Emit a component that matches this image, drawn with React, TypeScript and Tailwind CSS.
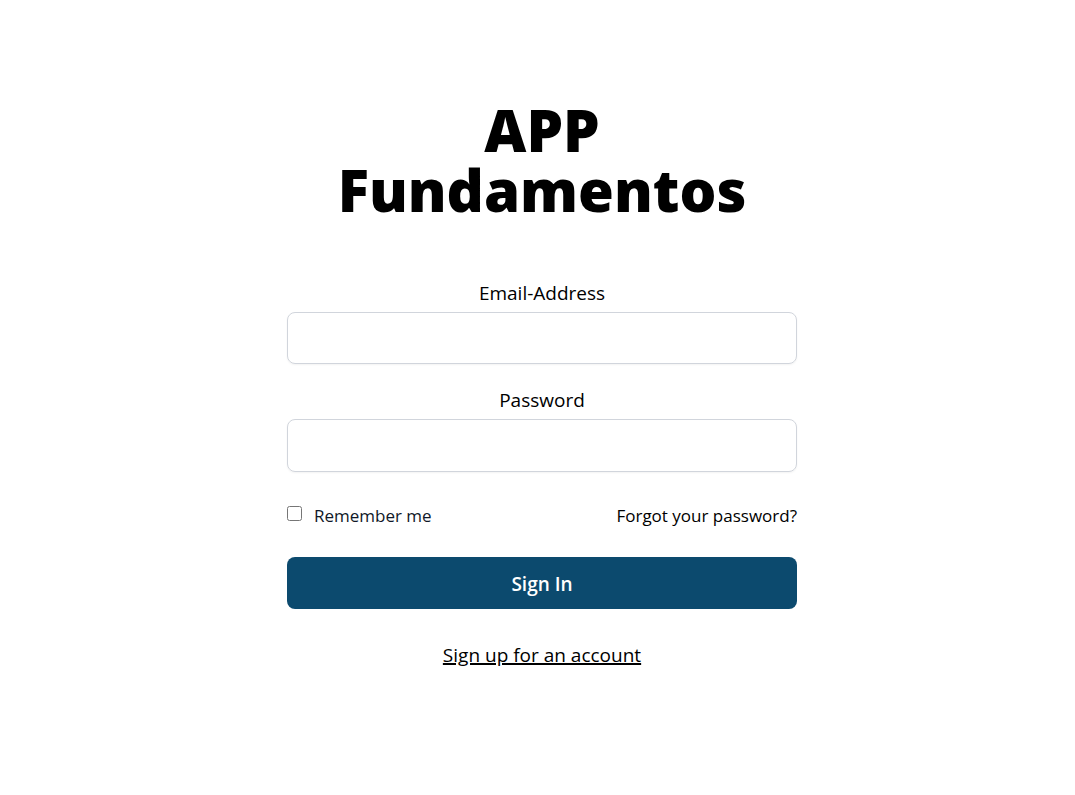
export default function App() {
  return (
    <main className="flex min-h-screen flex-col items-center bg-white pt-[100px] pr-4 pl-[25px] text-center font-['Open_Sans',sans-serif] text-black">
      <form className="w-full max-w-[510px]" onSubmit={(e) => e.preventDefault()}>
        <h1 className="text-[58px] leading-[60px] font-black">
          APP
          <br />
          Fundamentos
        </h1>
        <div className="mt-[59px]">
          <label htmlFor="email" className="block text-[19px] leading-[28px]">Email-Address</label>
          <input id="email" type="email" className="mt-[5px] block h-[52px] w-full rounded-lg border border-gray-300 px-3 shadow-xs" />
        </div>
        <div className="mt-[22px]">
          <label htmlFor="password" className="block text-[19px] leading-[28px]">Password</label>
          <input id="password" type="password" className="mt-[5px] block h-[53px] w-full rounded-lg border border-gray-300 px-3 shadow-xs" />
        </div>
        <div className="mt-[29px] flex items-start justify-between text-[17px] leading-[30px]">
          <div className="flex items-start gap-3">
            <input id="remember" type="checkbox" className="mt-[5px] size-[15px]" />
            <label htmlFor="remember" className="text-gray-900">Remember me</label>
          </div>
          <a href="#forgot">Forgot your password?</a>
        </div>
        <button type="submit" className="mt-[26px] h-[52px] w-full rounded-lg bg-[#0c4a6e] pt-[2px] text-[19px] font-semibold text-white">Sign In</button>
        <a href="#signup" className="mt-[32px] inline-block text-[19px] leading-[28px] underline decoration-2">Sign up for an account</a>
      </form>
    </main>
  );
}
